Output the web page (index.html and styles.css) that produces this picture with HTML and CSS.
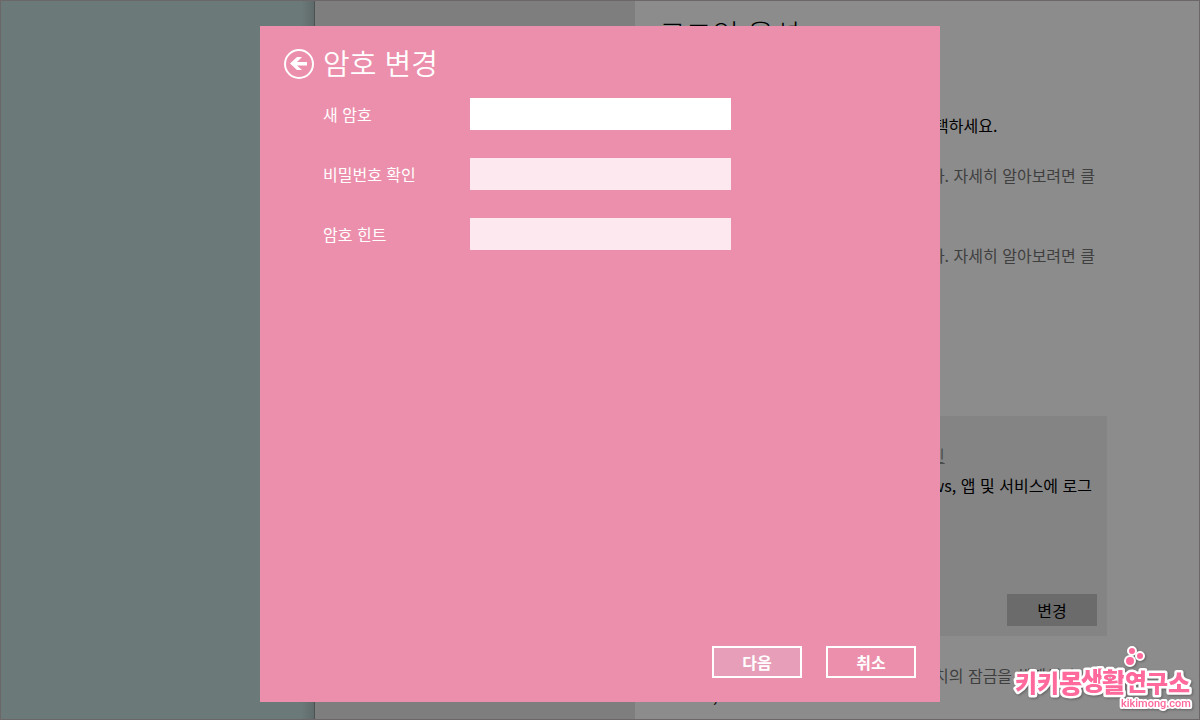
FILE: index.html
```
<!DOCTYPE html>
<html lang="ko">
<head>
	<meta charset="UTF-8">
	<meta name="viewport" content="width=device-width, initial-scale=1.0">
	<title>암호 변경</title>
	<link rel="stylesheet" href="styles.css">
</head>
<body>
	<div class="settings">
		<aside class="sidebar"></aside>
		<nav class="menu"></nav>
		<main class="content">
			<h2>로그인 옵션</h2>
			<div class="details">
				<p class="intro">택하세요.</p>
				<p class="note">다. 자세히 알아보려면 클</p>
				<p class="note">다. 자세히 알아보려면 클</p>
				<section class="card">
					<a href="#">인</a>
					<p>ws, 앱 및 서비스에 로그</p>
					<button type="button" class="change">변경</button>
				</section>
				<p class="note lock">치의 잠금을 해제해야</p>
			</div>
			<p class="rest">,</p>
		</main>
	</div>

	<div class="overlay">
		<form class="dialog">
			<header>
				<button type="button" class="back" aria-label="뒤로">
					<svg viewBox="0 0 30 30" width="30" height="30">
						<circle cx="15" cy="15" r="14" fill="none" stroke="#fff" stroke-width="2"/>
						<path d="M6 14.500L13 8h5l-5 5h10v3.500H13l5 4.500h-5z" fill="#fff"/>
					</svg>
				</button>
				<h1>암호 변경</h1>
			</header>
			<div class="fields">
				<label for="password">새 암호</label>
				<input type="password" id="password" class="active">
				<label for="confirm">비밀번호 확인</label>
				<input type="password" id="confirm">
				<label for="hint">암호 힌트</label>
				<input type="text" id="hint">
			</div>
			<footer>
				<button type="submit" class="btn primary">다음</button>
				<button type="button" class="btn">취소</button>
			</footer>
		</form>
	</div>

	<svg class="watermark" viewBox="0 0 190 70" width="190" height="70">
		<g class="bubbles">
			<circle cx="128" cy="15" r="5"/>
			<circle cx="130" cy="5" r="4"/>
			<circle cx="138" cy="10" r="4"/>
		</g>
		<g class="logo">
			<text x="13" y="46" font-size="24">키키</text>
			<text x="57" y="47" font-size="26">몽</text>
			<text x="79" y="44" font-size="25">생</text>
			<text x="100" y="46" font-size="26">활</text>
			<text x="123" y="45" font-size="24">연</text>
			<text x="144" y="46" font-size="24">구소</text>
		</g>
		<text class="site" x="119" y="61">kikimong.com</text>
	</svg>
</body>
</html>
```
FILE: styles.css
```
* {
	margin: 0;
	padding: 0;
	box-sizing: border-box;
}

body {
	font-family: "Noto Sans CJK KR", sans-serif;
	font-size: 16px;
	line-height: 20px;
	color: #000;
	overflow: hidden;
}

button,
input {
	font: inherit;
	border: none;
	border-radius: 0;
	outline: none;
}

/* settings page, dimmed */
.settings {
	display: grid;
	grid-template-columns: 314px 320px 1fr;
	height: 100vh;
	overflow: hidden;
	border: 1px solid #6b6768;
	background: #8c8c8c;
}

.sidebar {
	background: linear-gradient(to right, #6c7979 96%, #5f6b6b);
	border-right: 1px solid #4c5252;
}

.menu {
	background: #7e7e7e;
}

.content {
	padding: 12px 92px 0 24px;
}

h2 {
	font-size: 29px;
	font-weight: 300;
	line-height: 40px;
}

.details {
	margin: 62px 0 0 263px;
	white-space: nowrap;
}

.note {
	display: flex;
	justify-content: flex-end;
	padding-right: 12px;
	color: #3f3f3f;
}

.intro {
	padding-left: 12px;
	margin-bottom: 30px;
}

.note + .note {
	margin-top: 60px;
}

.card {
	display: flex;
	flex-direction: column;
	align-items: flex-start;
	height: 220px;
	margin: 151px 0 29px;
	padding: 29px 10px 10px 8px;
	background: #848484;
}

.card a {
	margin-bottom: 10px;
	color: #4c4c4c;
}

.card p {
	align-self: flex-end;
	padding-right: 5px;
}

.change {
	width: 90px;
	height: 32px;
	margin-top: auto;
	align-self: flex-end;
	background: #6b6b6b;
}

.lock {
	justify-content: flex-start;
	padding-left: 12px;
}

.rest {
	padding-left: 54px;
}

/* dialog */
.overlay {
	position: fixed;
	inset: 0;
	display: flex;
	justify-content: center;
	padding: 26px 0 18px;
}

.dialog {
	display: flex;
	flex-direction: column;
	width: 680px;
	padding: 16px 24px 24px;
	background: #ec8fac;
	color: #fff;
}

.dialog header {
	display: flex;
	align-items: center;
	gap: 9px;
	height: 40px;
}

.back {
	width: 30px;
	height: 30px;
	margin-top: 4px;
	background: none;
}

.back svg {
	display: block;
}

h1 {
	font-size: 29px;
	font-weight: 350;
	line-height: 40px;
}

.fields {
	display: grid;
	grid-template-columns: 147px 261px;
	row-gap: 28px;
	align-items: center;
	margin: 16px 0 0 39px;
}

.fields input {
	height: 32px;
	padding: 0 8px;
	background: #fce8ee;
}

.fields .active {
	background: #fff;
}

.dialog footer {
	display: flex;
	justify-content: flex-end;
	gap: 24px;
	margin-top: auto;
}

.btn {
	width: 90px;
	height: 32px;
	border: 2px solid #fff;
	background: none;
	color: #fff;
	font-weight: 700;
}

.primary {
	background: #e79fb9;
}

/* blog mark */
.watermark {
	position: fixed;
	right: 8px;
	bottom: 4px;
	overflow: visible;
	filter: drop-shadow(1px 1px 1px rgba(0,0,0,0.3));
}

.bubbles circle {
	fill: #ff699b;
	stroke: #fff;
	stroke-width: 2px;
}

.watermark text {
	font-weight: 900;
	fill: #ff699b;
	stroke: #fff;
	stroke-width: 5px;
	stroke-linejoin: round;
	paint-order: stroke;
}

.watermark .site {
	font-family: Roboto, sans-serif;
	font-size: 11px;
	font-weight: 500;
	stroke-width: 4px;
}
```
